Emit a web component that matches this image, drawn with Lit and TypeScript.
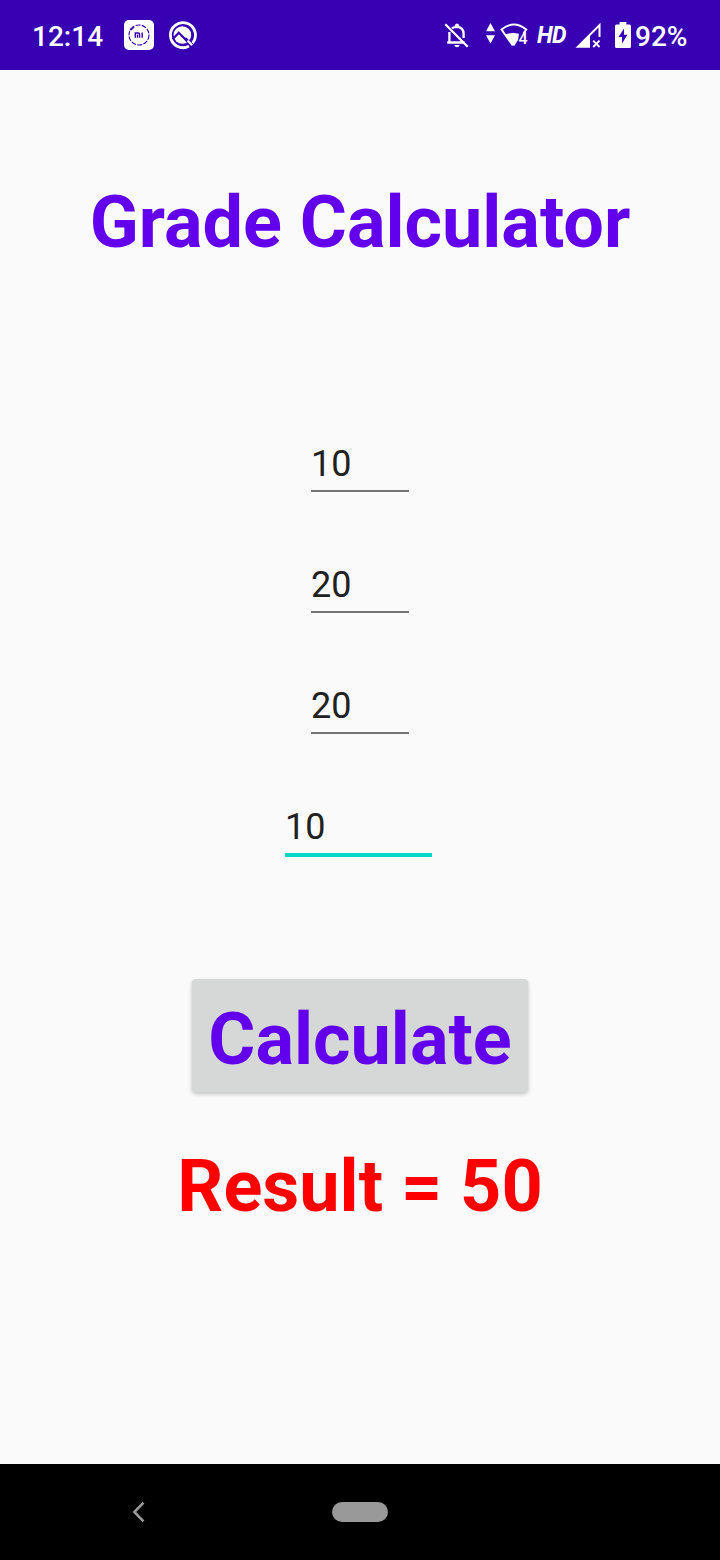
import { LitElement, html, css } from "lit";
import { customElement, property, state } from "lit/decorators.js";
import { classMap } from "lit/directives/class-map.js";

@customElement("status-bar")
class StatusBar extends LitElement {
  static styles = css`
    :host {
      display: flex;
      align-items: center;
      box-sizing: border-box;
      height: 70px;
      padding-left: 32px;
      padding-right: 32px;
      background: #3700b3;
      color: #fff;
      font-family: Roboto, sans-serif;
    }
    svg { display: block; flex: none; }
    .clock { width: 92px; font-size: 28px; font-weight: 500; line-height: 32px; padding-top: 3px; }
    .notes { display: flex; gap: 14px; }
    .system { display: flex; align-items: center; margin-left: auto; }
    .wifi { margin-left: 15px; }
    .hd { width: 29px; margin-left: 8px; padding-top: 2px; font-size: 23px; font-weight: 700; font-style: italic; line-height: 28px; letter-spacing: -0.7px; white-space: nowrap; }
    .signal { margin-left: 9px; }
    .battery { margin-left: 13px; }
    .percent { width: 53px; margin-left: 4px; font-size: 28px; font-weight: 500; line-height: 32px; padding-top: 3px; white-space: nowrap; }
    .glyph { font: 500 16px Roboto, sans-serif; }
  `;

  render() {
    return html`
      <div class="clock">12:14</div>
      <div class="notes">
        <svg width="30" height="30" viewBox="0 0 30 30" fill="none">
          <rect width="30" height="30" rx="5" fill="#fff" />
          <circle cx="15" cy="15" r="10" stroke="#3700b3" stroke-width="1.1" stroke-dasharray="5 1.2" />
          <path d="M5.500 10.500L10.500 6" stroke="#fff" stroke-width="5" />
          <path d="M6.300 10L10 6.500" stroke="#3700b3" stroke-width="1.900" />
          <path d="M11.300 17.700V13H14.300Q15.600 13 15.600 14.300V17.700M13.500 14.500V17.700M18.200 12.500V17.700" stroke="#3700b3" stroke-width="1.400" />
        </svg>
        <svg width="30" height="30" viewBox="0 0 30 30" fill="none">
          <path d="M24.600 23.100A12.500 12.500 0 1 0 21 26.100" stroke="#fff" stroke-width="2.800" />
          <circle cx="14.400" cy="15" r="8.800" fill="#fff" />
          <path d="M4.500 19.200L10.800 12.800L21.500 23.500" stroke="#3700b3" stroke-width="2.300" />
          <path d="M17 18.200L24.200 25.400" stroke="#3700b3" stroke-width="3" />
          <path d="M19.500 20.500L24.200 25.200" stroke="#fff" stroke-width="2.200" />
        </svg>
      </div>
      <div class="system">
        <svg width="26" height="30" viewBox="0 0 26 30" fill="none">
          <path d="M8 8.300Q10 6.900 13 6.900Q19.600 7.300 19.600 14V18M5.400 12V22.500H20.500M3.200 22.500H6" stroke="#fff" stroke-width="2.300" />
          <path d="M10.800 7V5Q13 1.900 15.200 5V7ZM10.300 25H15.700Q15 27.200 13 27.200Q11 27.200 10.300 25Z" fill="#fff" />
          <path d="M1.300 4.200L23.700 26.700" stroke="#fff" stroke-width="2.300" />
        </svg>
        <svg class="wifi" width="44" height="30" viewBox="0 0 44 30" fill="none">
          <path d="M1 11.300L5.500 3L10 11.300ZM1 15.200H10L5.500 23.500Z" fill="#fff" />
          <path d="M27.800 25.500L16.600 9.600Q28.800 -0.400 41.300 9.600L38.500 13" stroke="#fff" stroke-width="1.900" />
          <path d="M20 14.500Q26.500 11.800 34 13.800L33 20L29 26.200Z" fill="#fff" />
          <text class="glyph" x="33.500" y="24" fill="#fff">4</text>
        </svg>
        <div class="hd">HD</div>
        <svg class="signal" width="27" height="30" viewBox="0 0 27 30" fill="none">
          <path d="M0.500 27.800L25.500 2.800V17H23.500V7.500L15 16V27.800Z" fill="#fff" />
          <path d="M18.200 20.600L24.500 27M24.500 20.600L18.200 27" stroke="#fff" stroke-width="1.900" />
        </svg>
        <svg class="battery" width="16" height="30" viewBox="0 0 16 30" fill="none">
          <path d="M4.600 2H11.400V4.500H14.600Q16 4.500 16 6V26.500Q16 28 14.500 28H1.500Q0 28 0 26.500V6Q0 4.500 1.400 4.500H4.600Z" fill="#fff" />
          <path d="M9 8.500L3.500 17H7V23.500L12.500 14.800H9Z" fill="#3700b3" />
        </svg>
        <div class="percent">92%</div>
      </div>
    `;
  }
}

@customElement("grade-field")
class GradeField extends LitElement {
  @property() value = "";
  @property({ type: Boolean }) active = false;

  static styles = css`
    :host { display: block; }
    .field {
      box-sizing: border-box;
      width: 98px;
      height: 49px;
      margin-left: 311px;
      border-bottom: 2px solid #747474;
      color: #212121;
      font: 400 36px/42px Roboto, sans-serif;
    }
    .active { width: 147px; height: 51px; margin-left: 285px; border-bottom: 4px solid #03dac5; }
  `;

  render() {
    return html`<div class=${classMap({ field: true, active: this.active })}>${this.value}</div>`;
  }
}

@customElement("nav-bar")
class NavBar extends LitElement {
  static styles = css`
    :host { display: grid; grid-template-columns: 1fr 56px 1fr; align-items: center; height: 96px; background: #000; }
    .back { display: block; margin-left: 132px; }
    .home { height: 20px; border-radius: 10px; background: #999; }
  `;

  render() {
    return html`
      <svg class="back" width="14" height="22" viewBox="0 0 14 22" fill="none">
        <path d="M11.500 1.700L2.300 11L11.500 20.300" stroke="#999" stroke-width="2.600" />
      </svg>
      <div class="home"></div>
    `;
  }
}

@customElement("app-root")
class AppRoot extends LitElement {
  @state() private grades = ["10", "20", "20", "10"];
  @state() private result = 50;

  static styles = css`
    :host { display: flex; flex-direction: column; height: 1560px; background: #fafafa; font-family: Roboto, sans-serif; }
    .content { flex: 1; display: flex; flex-direction: column; padding-top: 111px; }
    .title, .calculate, .result { font-family: Roboto, sans-serif; font-size: 72px; font-weight: 700; line-height: 84px; text-align: center; white-space: nowrap; }
    .title { margin: 0; color: #6200ee; }
    .fields { display: flex; flex-direction: column; gap: 72px; margin-top: 178px; }
    .calculate {
      align-self: center;
      box-sizing: border-box;
      width: 336px;
      height: 113px;
      margin-top: 122px;
      padding: 9px 0 0;
      border: 0;
      border-radius: 4px;
      background: #d6d7d7;
      color: #6200ee;
      box-shadow: 0 2px 4px rgba(0, 0, 0, 0.24);
    }
    .result { margin-top: 53px; color: #f00; }
  `;

  render() {
    return html`
      <status-bar></status-bar>
      <main class="content">
        <h1 class="title">Grade Calculator</h1>
        <div class="fields">
          ${this.grades.map((grade, i) => html`<grade-field .value=${grade} ?active=${i === 3}></grade-field>`)}
        </div>
        <button class="calculate">Calculate</button>
        <div class="result">Result = ${this.result}</div>
      </main>
      <nav-bar></nav-bar>
    `;
  }
}
